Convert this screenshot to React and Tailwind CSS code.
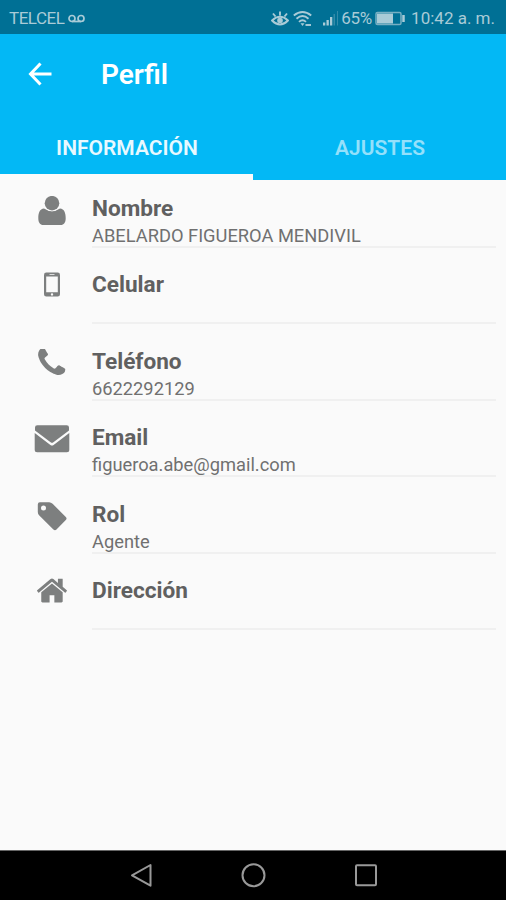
import React, { useState } from 'react';

const UserIcon = () => (
  <svg width="36" height="36" viewBox="0 0 36 36" fill="currentColor">
    <path d="M10 12.600Q18 18 26 12.600C30.300 13 31.700 17 31.700 22.200 31.700 26.500 29.800 29 26.800 29H9.200C6.200 29 4.300 26.500 4.300 22.200 4.300 17 5.700 13 10 12.600z" />
    <circle cx="18" cy="7.200" r="8.100" fill="#fafafa" />
    <circle cx="18" cy="7.200" r="7.300" />
  </svg>
);

const MobileIcon = () => (
  <svg width="36" height="36" viewBox="0 0 36 36" fill="currentColor" fillRule="evenodd">
    <path d="M12.300.600h11.400a2.300 2.300 0 0 1 2.300 2.300v19.300a2.300 2.300 0 0 1-2.300 2.300H12.300a2.300 2.300 0 0 1-2.300-2.300V2.900A2.300 2.300 0 0 1 12.300.600zM12.200 4.500v15.700h11.600V4.500zM15.500 2.200v.700h5v-.700zM18 21.200a1.200 1.200 0 1 0 0 2.400 1.200 1.200 0 0 0 0-2.400z" />
  </svg>
);

const PhoneIcon = () => (
  <svg width="36" height="36" viewBox="0 0 36 36" fill="currentColor">
    <path
      transform="translate(.4 -3.600) scale(.0193)"
      d="M1600 1240q0 27-10 70.5t-21 68.5q-21 50-122 106-94 51-186 51-27 0-52.5-3.500t-57.5-12.5-47.5-14.500-55.5-20.500-49-18q-98-35-175-83-128-79-264.5-215.5t-215.5-264.5q-48-77-83-175-3-9-18-49t-20.500-55.500-14.500-47.500-12.500-57.500-3.500-52.500q0-92 51-186 56-101 106-122 25-11 68.500-21t70.500-10q14 0 21 3 18 6 53 76 11 19 30 54t35 63.500 31 53.500q3 4 17.500 25t21.500 35.500 7 28.500q0 20-28.500 50t-62 55-62 53-28.500 46q0 9 5 22.500t8.500 20.500 14 24 11.500 19q76 137 174 235t235 174q2 1 19 11.500t24 14 20.500 8.500 22.500 5q18 0 46-28.500t53-62 55-62 50-28.500q14 0 28.500 7t35.500 21.500 25 17.500q25 15 53.500 31t63.500 35 54 30q70 35 76 53 3 7 3 21z"
    />
  </svg>
);

const EnvelopeIcon = () => (
  <svg width="36" height="36" viewBox="0 0 36 36" fill="currentColor">
    <path d="M3.300.200h29.400a2.300 2.300 0 0 1 2.300 2.300v2.900L19.400 17.300q-1.400 1.100-2.800 0L1 5.400V2.500A2.300 2.300 0 0 1 3.300.200z" />
    <path d="M.7 8 16.400 20q1.600 1.200 3.200 0L35.300 8v16.700a2.500 2.500 0 0 1-2.500 2.500H3.200a2.500 2.500 0 0 1-2.500-2.500z" />
  </svg>
);

const TagIcon = () => (
  <svg width="36" height="36" viewBox="0 0 36 36" fill="currentColor" fillRule="evenodd">
    <path d="M5.900.300h9.200q2 0 3.500 1.500L31.800 14.900q1.500 1.600 0 3.200l-9.300 9.400q-1.500 1.500-3.100 0L5.300 13.600q-1.500-1.500-1.500-3.500V2.400Q3.800.300 5.900.300zM9.500 3.500a2.500 2.500 0 1 0 0 5 2.500 2.500 0 0 0 0-5z" />
  </svg>
);

const HomeIcon = () => (
  <svg width="36" height="36" viewBox="0 0 36 36" fill="currentColor">
    <path
      transform="translate(2.500 -4.100) scale(.0186)"
      d="M1408 992v480q0 26-19 45t-45 19h-384v-384h-256v384h-384q-26 0-45-19t-19-45v-480q0-1 .5-3t.5-3l575-474 575 474q1 2 1 6zm223-69l-62 74q-8 9-21 11h-3q-13 0-21-7l-692-577-692 577q-12 8-24 7-13-2-21-11l-62-74q-8-10-7-23.500t11-21.500l719-599q32-26 76-26t76 26l244 204v-195q0-14 9-23t23-9h192q14 0 23 9t9 23v408l219 182q10 8 11 21.500t-7 23.500z"
    />
  </svg>
);

const fields = [
  { label: 'Nombre', value: 'ABELARDO FIGUEROA MENDIVIL', icon: <UserIcon /> },
  { label: 'Celular', value: '', icon: <MobileIcon /> },
  { label: 'Teléfono', value: '6622292129', icon: <PhoneIcon /> },
  { label: 'Email', value: 'figueroa.abe@gmail.com', icon: <EnvelopeIcon /> },
  { label: 'Rol', value: 'Agente', icon: <TagIcon /> },
  { label: 'Dirección', value: '', icon: <HomeIcon /> },
];

const StatusBar = () => (
  <div className="h-[34px] shrink-0 bg-[#007095] text-[#a9cbd7] flex items-center pt-[3px] pl-[9px] pr-[11px] text-[17px]">
    <span className="tracking-[-0.5px]">TELCEL</span>
    <svg className="ml-[4px]" width="17" height="10" viewBox="0 0 17 10" fill="none" stroke="currentColor" strokeWidth="1.700">
      <circle cx="4" cy="4.500" r="3" />
      <circle cx="13" cy="4.500" r="3" />
      <path d="M4 7.500h9" />
    </svg>
    <div className="ml-auto flex items-center">
      <svg width="18" height="18" viewBox="0 0 18 18" fill="none" stroke="currentColor" strokeWidth="1.900">
        <path d="M1 10.500Q9 3 17 10.500Q9 18.500 1 10.500zM9 5.500V1.500M4.500 6.500 2 3.500M13.500 6.500 16 3.500" />
        <circle cx="9" cy="10.500" r="2.800" fill="currentColor" stroke="none" />
      </svg>
      <svg className="ml-[4px]" width="20" height="18" viewBox="0 0 20 18" fill="none" stroke="currentColor" strokeWidth="1.900">
        <path d="M.8 5.500Q9.500-1.500 18.200 5.500M3.500 8.700Q9.500 3.500 15.500 8.700M6 11.900Q9.500 8.700 13 11.900" />
        <path d="M7.500 13.200h4L9.500 16z" fill="currentColor" stroke="none" />
        <path d="M12.500 15h5.500" />
      </svg>
      <svg className="ml-[9px]" width="18" height="17" viewBox="0 0 18 17" fill="currentColor">
        <path d="M1 12.500h2.300v3H1zM4.500 10h2.300v5.500H4.500zM8 7h2.300v8.500H8z" />
        <path d="M11.500 4h1.500v11.500h-1.500zM15 1h1v14.500h-1z" opacity=".3" />
      </svg>
      <span className="ml-[1px] tracking-[-0.2px]">65%</span>
      <svg className="ml-[3px]" width="31" height="16" viewBox="0 0 31 16" fill="none">
        <rect x="1" y="1.500" width="25" height="12" rx="1.500" stroke="currentColor" strokeWidth="1.500" opacity=".7" />
        <rect x="2" y="2.500" width="16" height="10" fill="currentColor" />
        <path d="M28.500 4v7" stroke="currentColor" strokeWidth="2.500" />
      </svg>
      <span className="ml-[5px]">10:42 a. m.</span>
    </div>
  </div>
);

const NavBar = () => (
  <div className="h-[50px] shrink-0 bg-black border-t border-[#666] flex items-center justify-center gap-[87px] pb-[1px] text-[#999]">
    <svg width="26" height="26" viewBox="0 0 26 26" fill="none" stroke="currentColor" strokeWidth="2" strokeLinejoin="round">
      <path d="M5 13.300 23.500 3v20.700z" />
    </svg>
    <svg width="26" height="26" viewBox="0 0 26 26" fill="none" stroke="currentColor" strokeWidth="2">
      <circle cx="13.500" cy="13.200" r="11" />
    </svg>
    <svg width="26" height="26" viewBox="0 0 26 26" fill="none" stroke="currentColor" strokeWidth="2">
      <rect x="3" y="3.200" width="20" height="20" rx="1" />
    </svg>
  </div>
);

const App = () => {
  const [tab, setTab] = useState('info');

  const tabCls = (name) =>
    `flex-1 h-full pt-[9px] pl-[1px] text-[21px] font-semibold border-b-[6px] ${
      tab === name ? 'text-[#e8f9ff] border-[#fafafa]' : 'text-[#94e0fb] border-transparent'
    }`;

  return (
    <div className="h-screen flex flex-col bg-[#fafafa] font-['Roboto',sans-serif] overflow-hidden">
      <StatusBar />

      <header className="h-[146px] shrink-0 bg-[#03b8f5] flex flex-col">
        <div className="h-[80px] flex items-center pl-[28px] text-white">
          <svg width="24" height="24" viewBox="0 0 24 24" fill="none" stroke="currentColor" strokeWidth="3">
            <path d="M23.500 12H3M12.500 1.500 2.500 12l10 10.500" />
          </svg>
          <h1 className="ml-[49px] pt-[2px] text-[28px] leading-8 font-semibold">Perfil</h1>
        </div>
        <div className="h-[66px] flex">
          <button className={tabCls('info')} onClick={() => setTab('info')}>INFORMACIÓN</button>
          <button className={tabCls('settings')} onClick={() => setTab('settings')}>AJUSTES</button>
        </div>
      </header>

      <main className="flex-1 pt-[16px]">
        {fields.map((f) => (
          <div key={f.label} className="h-[76.400px] flex pl-[34px] pr-[10px]">
            <div className="w-[36px] shrink-0 text-[#7d7f7f]">{f.icon}</div>
            <div className="ml-[22px] flex-1 h-[52px] border-b-2 border-[#f0f0f0]">
              <h2 className="text-[22.600px] leading-[25px] font-bold text-[#606060]">{f.label}</h2>
              <p className="text-[18.300px] leading-[30px] text-[#707070]">{f.value}</p>
            </div>
          </div>
        ))}
      </main>

      <NavBar />
    </div>
  );
};

export default App;
